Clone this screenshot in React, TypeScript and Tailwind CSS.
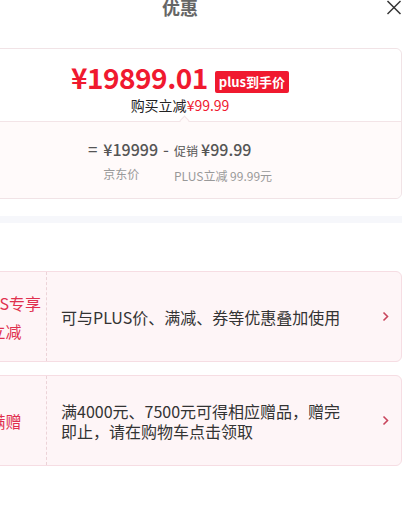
const font = { fontFamily: '"Noto Sans CJK SC", "Noto Sans", sans-serif' };

function Chevron() {
  return (
    <svg width="7" height="11" viewBox="0 0 7 11" fill="none" className="shrink-0">
      <polyline points="1.5,1.5 5.5,5.5 1.5,9.5" stroke="#c8455c" strokeWidth="1.6" />
    </svg>
  );
}

function PromoCard({ tag, text }: { tag: string[]; text: string }) {
  return (
    <div className="flex items-center h-[91px] bg-[#fef5f7] border border-[#f6dde3] rounded-[6px]">
      <div className="w-[88px] h-full pl-[6px] flex flex-col items-center justify-center border-r border-dashed border-[#ecd3d8] text-[16px] leading-[28px] text-[#e0304e]">
        {tag.map(t => (
          <span key={t}>{t}</span>
        ))}
      </div>
      <p className="w-[304px] pl-[14px] text-[16px] leading-[20px] text-[#333]">{text}</p>
      <div className="ml-auto pr-[12px]">
        <Chevron />
      </div>
    </div>
  );
}

export default function App() {
  return (
    <div className="w-[403px] h-[512px] overflow-hidden bg-white" style={font}>
      <div className="ml-[-42px] w-[444px]">
        <div className="relative h-[50px]">
          <h3 className="text-center text-[18px] leading-[18px] font-bold text-[#666] mt-[-2px]">优惠</h3>
          <svg
            width="16"
            height="15"
            viewBox="0 0 16 15"
            className="absolute left-[428px] top-[2px]"
            stroke="#333"
            strokeWidth="1.5"
          >
            <line x1="1.5" y1="1" x2="14.5" y2="14" />
            <line x1="14.5" y1="1" x2="1.5" y2="14" />
          </svg>
        </div>

        <div className="relative border border-[#f1e3e6] rounded-[6px]">
          <div className="h-[72px] bg-white rounded-t-[6px] flex flex-col items-center pt-[14px]">
            <div className="flex items-end">
              <span className="text-[28px] leading-[28px] font-bold text-[#f0192f] tracking-[-0.5px]">¥19899.01</span>
              <span className="ml-[7px] mb-[-2px] h-[22px] px-[4px] rounded-[2px] bg-[#f0192f] text-white text-[13px] leading-[22px] font-bold">
                plus到手价
              </span>
            </div>
            <p className="mt-[4px] text-[14px] leading-[20px] text-[#222]">
              购买立减<span className="text-[#f0192f]">¥99.99</span>
            </p>
          </div>
          <div className="absolute left-[222px] top-[68px] w-[7px] h-[7px] rotate-45 bg-[#fffafa] border-l border-t border-[#f3e4e7]" />
          <div className="h-[77px] bg-[#fffafa] rounded-b-[6px] border-t border-[#f3e4e7] flex justify-center pt-[17px]">
            <div className="flex">
              <span className="text-[17px] leading-[20px] text-[#555] mr-[6px]">=</span>
              <div className="flex flex-col">
                <span className="text-[16px] leading-[20px] font-medium text-[#555]">¥19999</span>
                <span className="mt-[7px] text-[12px] leading-[16px] text-[#999]">京东价</span>
              </div>
              <span className="text-[17px] leading-[20px] text-[#555] mx-[5px]">-</span>
              <div className="flex flex-col">
                <span className="text-[16px] leading-[20px] font-medium text-[#555]">
                  <span className="text-[12px] font-normal mr-[3px]">促销</span>¥99.99
                </span>
                <span className="mt-[7px] text-[12px] leading-[16px] text-[#999]">PLUS立减 99.99元</span>
              </div>
            </div>
          </div>
        </div>

        <div className="mt-[17px] h-[7px] bg-[#f6f7fb]" />

        <div className="mt-[48px] flex flex-col gap-[13px]">
          <PromoCard tag={['PLUS专享', '立减']} text="可与PLUS价、满减、券等优惠叠加使用" />
          <PromoCard tag={['满赠']} text="满4000元、7500元可得相应赠品，赠完即止，请在购物车点击领取" />
        </div>
      </div>
    </div>
  );
}
